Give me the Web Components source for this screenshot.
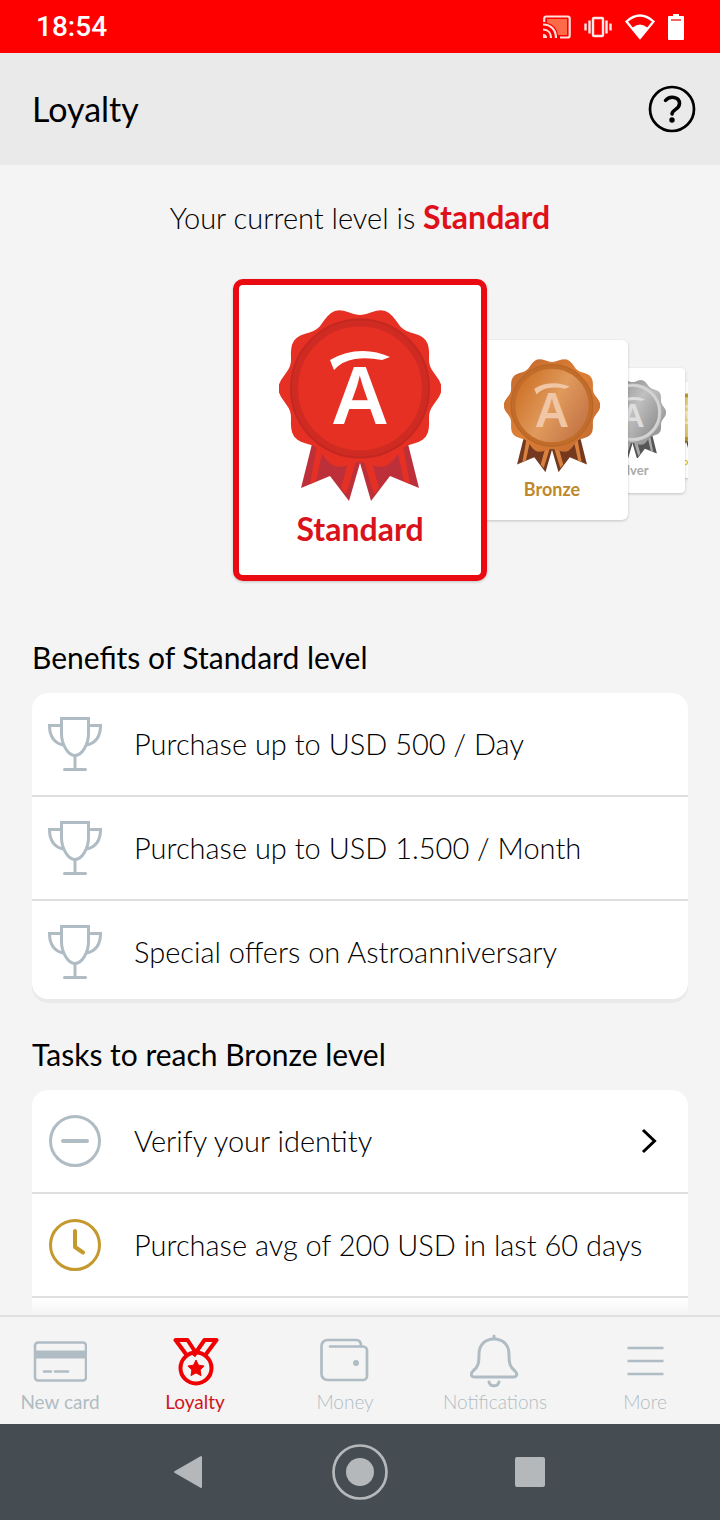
<!DOCTYPE html>
<html lang="en">
<head>
<meta charset="UTF-8">
<meta name="viewport" content="width=device-width, initial-scale=1">
<title>Loyalty</title>
<style>
    html, body {
        margin: 0;
        height: 100%;
    }

    body {
        font-family: "Lato", "Open Sans", sans-serif;
        color: #000;
        background: #f4f4f4;
    }
</style>
</head>
<body>
<loyalty-app></loyalty-app>

<script>
const icons = {
    trophy: `<svg width="54" height="54" viewBox="0 0 54 54" fill="none" stroke="#b0bcc3" stroke-width="3">
        <path d="M13.5 1.5h27v15c0 10-6 22-13.500 22s-13.500-12-13.500-22z"/>
        <path d="M13 8.500H1.500C1.500 19 6 26 15.500 28M41 8.500h11.500C52.500 19 48 26 38.500 28M27 39v13"/>
        <path d="M16.500 52.500h21" stroke-linecap="round"/></svg>`,
    minus: `<svg width="54" height="54" viewBox="0 0 54 54" fill="none" stroke="#b0bcc3" stroke-width="3">
        <circle cx="27" cy="27" r="24.500"/><path d="M15 27h24" stroke-width="4" stroke-linecap="round"/></svg>`,
    clock: `<svg width="54" height="54" viewBox="0 0 54 54" fill="none" stroke="#c49a2e" stroke-width="3">
        <circle cx="27" cy="27" r="24.500"/><path d="M27 13v16l8 5.500" stroke-width="4" stroke-linecap="round" stroke-linejoin="round"/></svg>`,
    card: `<svg width="54" height="50" viewBox="0 0 54 50" fill="none" stroke="#b0bcc3" stroke-width="2.500">
        <rect x="2" y="6.500" width="51" height="38" rx="3"/>
        <path d="M2 18.500h51" stroke-width="8"/><path d="M11 35.500h7M22 35.500h13" stroke-linecap="round"/></svg>`,
    medal: `<svg width="48" height="50" viewBox="0 0 48 50" fill="none" stroke="#f00000" stroke-width="4" stroke-linejoin="round">
        <circle cx="25" cy="32" r="15.500"/>
        <path d="M16 19.500L4.500 4h12l8.500 13M34 19.500L45.500 4h-12L22.500 20"/>
        <path d="M25 24l2.500 5.200 5.600.8-4 4 .9 5.600-5-2.700-5 2.700.9-5.600-4-4 5.600-.8z" fill="#f00000" stroke-width="1"/></svg>`,
    wallet: `<svg width="50" height="50" viewBox="0 0 50 50" fill="none" stroke="#b0bcc3" stroke-width="2.700">
        <path d="M10 10.500h33a4 4 0 0 1 4 4V40a4 4 0 0 1-4 4H7.500a6 6 0 0 1-6-6V10a6 6 0 0 1 6-6H36c3 0 5 2 5 6" stroke-linecap="round"/>
        <circle cx="36" cy="27" r="3" fill="#b0bcc3" stroke="none"/></svg>`,
    bell: `<svg width="50" height="56" viewBox="0 0 50 56" fill="none" stroke="#b0bcc3" stroke-width="3" stroke-linecap="round">
        <path d="M24 6c-9 0-15 6-15 15 0 10-1 13-6 17-3 3-2 6 2 6h38c4 0 5-3 2-6-5-4-6-7-6-17 0-9-6-15-15-15z"/>
        <path d="M24 3v2M19 49c1 5 9 5 10 0"/></svg>`,
    menu: `<svg width="50" height="50" viewBox="0 0 50 50" stroke="#b0bcc3" stroke-width="2.700">
        <path d="M7.500 12h36M7.500 25h36M7.500 38h36"/></svg>`,
    chevron: `<svg width="18" height="26" viewBox="0 0 18 26" fill="none" stroke="#000" stroke-width="3">
        <path d="M3 2l11.500 11L3 24"/></svg>`
};

class StatusBar extends HTMLElement {
    constructor() {
        super();
        this.attachShadow({ mode: 'open' });
    }

    connectedCallback() {
        this.shadowRoot.innerHTML = `
        <style>
            :host {
                display: flex;
                align-items: center;
                justify-content: space-between;
                height: 53px;
                padding: 0 36px;
                background: #f00;
                color: #fff;
                font: 500 28px/32px Roboto, sans-serif;
                box-sizing: border-box;
            }

            .icons {
                display: flex;
                align-items: center;
                gap: 13px;
            }

            svg { display: block; }
        </style>
        <time>18:54</time>
        <div class="icons">
            <svg width="28" height="24" viewBox="0 0 28 24" fill="none" stroke="#ffe0dc" stroke-width="2.200">
                <path d="M4 4h20v16h-9C14 13 10 9 4 8z" fill="#ff6b48" stroke="none"/>
                <path d="M1.200 7V3.500a2 2 0 0 1 2-2h21.500a2 2 0 0 1 2 2v17a2 2 0 0 1-2 2H17M0 9.500c8 0 13 5.500 13 13.500M0 14.500c5 0 8 3.500 8 8.500"/>
                <path d="M0 19a4 4 0 0 1 4 4H0z" fill="#ffe0dc" stroke="none"/>
            </svg>
            <svg width="28" height="22" viewBox="0 0 28 22" fill="none" stroke="#ffe8e8" stroke-width="2.400">
                <rect x="9" y="2" width="10" height="18" rx="1"/>
                <path d="M5.500 4.500v13M1.500 7.500v7M22.500 4.500v13M26.500 7.500v7"/>
            </svg>
            <svg width="30" height="26" viewBox="0 0 30 26">
                <path d="M1.500 7.500Q15-4.500 28.500 7.500L15 24z" fill="none" stroke="#fff" stroke-width="2.200"/>
                <path d="M7 14q8-7 16 0l-8 10z" fill="#fff"/>
            </svg>
            <svg width="16" height="26" viewBox="0 0 16 26">
                <path d="M5 0h6v2h4q1 0 1 1v22q0 1-1 1H1q-1 0-1-1V3q0-1 1-1h4z" fill="#fff"/>
                <path d="M3 6h10" stroke="#f23030" stroke-width="1.500"/>
            </svg>
        </div>
        `;
    }
}

class PageHeader extends HTMLElement {
    constructor() {
        super();
        this.attachShadow({ mode: 'open' });
    }

    connectedCallback() {
        this.shadowRoot.innerHTML = `
        <style>
            :host {
                display: flex;
                align-items: center;
                justify-content: space-between;
                height: 112px;
                padding: 0 24px 0 32px;
                background: #eaeaea;
                box-sizing: border-box;
            }

            h1 {
                margin: 0;
                font-size: 34px;
                line-height: 40px;
                font-weight: 400;
            }

            button {
                padding: 0;
                border: 0;
                background: none;
            }

            svg { display: block; }
        </style>
        <h1><slot></slot></h1>
        <button type="button" aria-label="Help">
            <svg width="48" height="48" viewBox="0 0 48 48" fill="none" stroke="#000">
                <circle cx="24" cy="24" r="22" stroke-width="2.700"/>
                <path d="M17.500 15.500c4-5 14-4 14 3 0 6-7 5.500-7.500 10.500" stroke-width="3.500" stroke-linecap="round"/>
                <circle cx="24" cy="35" r="2.700" fill="#000" stroke="none"/>
            </svg>
        </button>
        `;
    }
}

// Colours of each medal: scallop gradient, ring, face gradient, ribbon, stripe, letter
const medals = {
    standard: { edge: ['#e63023', '#e63023', '#e63023'], ring: '#cf2b23', face: ['#e63023', '#e63023', '#e63023'], ribbon: '#bd303a', stripe: '#e63023', mark: '#fff' },
    bronze: { edge: ['#c0672d', '#dd7f35', '#c0682f'], ring: '#c26c2a', face: ['#cc6c20', '#e09a5c', '#c06f42'], ribbon: '#75391f', stripe: '#d9823f', mark: '#f0c6a4' },
    silver: { edge: ['#777', '#bcbcbc', '#888'], ring: '#d4d4d4', face: ['#909090', '#c0c0c0', '#8d8d8d'], ribbon: '#565656', stripe: '#aaa', mark: '#dedede' },
    gold: { edge: ['#b48d20', '#d4b342', '#a98420'], ring: '#bd9828', face: ['#d5b84a', '#ead886', '#c9a534'], ribbon: '#5e4513', stripe: '#d4b342', mark: '#f5e8b4' }
};

function scallop(cx, cy) {
    const points = [];
    for (let a = 0; a < 360; a += 3) {
        const t = a * Math.PI / 180;
        const r = 77.5 + 4 * Math.cos(10 * t);
        points.push((cx + r * Math.cos(t)).toFixed(1) + ' ' + (cy + r * Math.sin(t)).toFixed(1));
    }
    return 'M' + points.join('L') + 'z';
}

class LevelCard extends HTMLElement {
    constructor() {
        super();
        this.attachShadow({ mode: 'open' });
    }

    connectedCallback() {
        const c = medals[this.getAttribute('level')];
        const stops = (list) => list.map((color, i) => `<stop offset="${i / 2}" stop-color="${color}"/>`).join('');
        const ribbon = `
            <path d="M34 130L22 178l29-12 19 25 11-38V130z" fill="${c.ribbon}"/>
            <path d="M39 130h7L37 171l-6 3zM71 145h8L67 184l-5-6z" fill="${c.stripe}"/>`;

        this.shadowRoot.innerHTML = `
        <style>
            :host {
                display: flex;
                flex: none;
                flex-direction: column;
                align-items: center;
                box-sizing: border-box;
                position: relative;
                background: #fff;
                box-shadow: 0 1px 3px rgba(0, 0, 0, 0.2);
                font-weight: 700;
            }

            :host([level="standard"]) {
                width: 254px;
                height: 302px;
                padding-top: 25px;
                border: 6px solid #ea0a12;
                border-radius: 10px;
                color: #d8131b;
                font-size: 32px;
                line-height: 40px;
                z-index: 4;
                --medal: 162px;
                --gap: 8px;
            }

            :host([level="bronze"]) {
                width: 152px;
                height: 180px;
                padding-top: 19px;
                margin-left: -11px;
                border-radius: 6px;
                color: #c0882a;
                font-size: 18px;
                line-height: 24px;
                z-index: 3;
                --medal: 96px;
                --gap: 5px;
            }

            :host([level="silver"]) {
                width: 105px;
                height: 125px;
                padding-top: 12px;
                margin-left: -48px;
                border-radius: 4px;
                color: #aaa;
                font-size: 13px;
                line-height: 16px;
                z-index: 2;
                --medal: 67px;
                --gap: 4px;
            }

            :host([level="gold"]) {
                width: 80px;
                height: 96px;
                padding-top: 10px;
                margin-left: -39px;
                border-radius: 4px;
                color: #d8bd2c;
                font-size: 10px;
                line-height: 12px;
                z-index: 1;
                --medal: 52px;
                --gap: 2px;
            }

            svg {
                display: block;
                width: var(--medal);
                margin-bottom: var(--gap);
            }
        </style>
        <svg viewBox="0 0 162 191" aria-hidden="true">
            <defs>
                <linearGradient id="edge" x1="0" y1="0" x2="1" y2="1">${stops(c.edge)}</linearGradient>
                <linearGradient id="face" x1="0" y1="0.2" x2="1" y2="0.8">${stops(c.face)}</linearGradient>
            </defs>
            <g>${ribbon}</g>
            <g transform="matrix(-1 0 0 1 162 0)">${ribbon}</g>
            <path d="${scallop(81, 78.5)}" fill="url(#edge)"/>
            <circle cx="81" cy="78.5" r="66" fill="url(#face)" stroke="${c.ring}" stroke-width="8"/>
            <circle cx="81" cy="78.5" r="69" fill="none" stroke="#000" stroke-opacity="0.06" stroke-width="2"/>
            <path d="M51 50Q66 41 84 41q14 0 27 6l-8 3Q88 47 76 49 63 51 55 60z" fill="${c.mark}"/>
            <text x="81" y="114" text-anchor="middle" font-family="Noto Sans, sans-serif" font-weight="600" font-size="80" fill="${c.mark}">A</text>
        </svg>
        <slot></slot>
        `;
    }
}

class LevelCarousel extends HTMLElement {
    constructor() {
        super();
        this.attachShadow({ mode: 'open' });
    }

    connectedCallback() {
        this.shadowRoot.innerHTML = `
        <style>
            :host {
                display: flex;
                align-items: center;
                padding-left: calc(50% - 127px);
                overflow-x: clip;
                isolation: isolate;
            }
        </style>
        <slot></slot>
        `;
    }
}

class ListSection extends HTMLElement {
    constructor() {
        super();
        this.attachShadow({ mode: 'open' });
    }

    connectedCallback() {
        this.shadowRoot.innerHTML = `
        <style>
            :host { display: block; }

            h2 {
                margin: 0 0 16px;
                font-size: 30px;
                line-height: 40px;
                font-weight: 400;
            }

            .list {
                background: #fff;
                border-radius: 16px;
                box-shadow: 0 4px 0 #eaeaea;
                overflow: hidden;
            }
        </style>
        <h2>${this.getAttribute('heading')}</h2>
        <div class="list" role="list"><slot></slot></div>
        `;
    }
}

class ListRow extends HTMLElement {
    constructor() {
        super();
        this.attachShadow({ mode: 'open' });
    }

    connectedCallback() {
        const icon = icons[this.getAttribute('icon')] || '';
        const href = this.getAttribute('href');
        const tag = href ? 'a' : 'div';

        this.setAttribute('role', 'listitem');
        this.shadowRoot.innerHTML = `
        <style>
            :host {
                display: block;
                border-bottom: 2px solid #e0e0e0;
            }

            :host(:last-child) { border-bottom: 0; }

            .row {
                display: flex;
                align-items: center;
                gap: 32px;
                min-height: 54px;
                padding: 24px 30px 24px 16px;
                color: inherit;
                text-decoration: none;
                font-size: 29px;
                line-height: 40px;
                font-weight: 300;
            }

            :host(:last-child) .row { padding-bottom: 20px; }

            .text { flex: 1; }

            svg { display: block; flex: none; }
        </style>
        <${tag} class="row" ${href ? `href="${href}"` : ''}>
            ${icon}
            <span class="text"><slot></slot></span>
            ${href ? icons.chevron : ''}
        </${tag}>
        `;
    }
}

class TabBar extends HTMLElement {
    constructor() {
        super();
        this.attachShadow({ mode: 'open' });
    }

    connectedCallback() {
        const tabs = [
            { label: 'New card', icon: 'card', style: 'strong' },
            { label: 'Loyalty', icon: 'medal', style: 'active' },
            { label: 'Money', icon: 'wallet', style: '' },
            { label: 'Notifications', icon: 'bell', style: '' },
            { label: 'More', icon: 'menu', style: '' }
        ];

        this.shadowRoot.innerHTML = `
        <style>
            :host { display: block; }

            nav {
                display: grid;
                grid-template-columns: 4fr 5fr 5fr 5fr 5fr;
                height: 109px;
                box-sizing: border-box;
                border-top: 2px solid #e0e0e0;
                background: #f4f4f4;
            }

            a {
                display: flex;
                flex-direction: column;
                align-items: center;
                padding-top: 16px;
                color: #b0bcc3;
                text-decoration: none;
                font-size: 19px;
                line-height: 26px;
                font-weight: 300;
            }

            .icon {
                display: flex;
                align-items: center;
                height: 56px;
            }

            .strong { font-weight: 400; }

            .active {
                color: #d0161e;
                font-weight: 400;
            }
        </style>
        <nav>
            ${tabs.map((tab) => `
                <a href="#" class="${tab.style}">
                    <span class="icon">${icons[tab.icon]}</span>
                    ${tab.label}
                </a>
            `).join('')}
        </nav>
        `;
    }
}

class SystemNav extends HTMLElement {
    constructor() {
        super();
        this.attachShadow({ mode: 'open' });
    }

    connectedCallback() {
        this.shadowRoot.innerHTML = `
        <style>
            :host {
                display: flex;
                align-items: center;
                justify-content: center;
                gap: 110px;
                height: 96px;
                background: #454d52;
            }

            button {
                width: 60px;
                height: 60px;
                padding: 0;
                border: 0;
                background: none;
            }

            svg { display: block; }
        </style>
        <button type="button" aria-label="Back">
            <svg width="60" height="60" viewBox="0 0 60 60"><path d="M41 15v30L15 30z" fill="#b4b8ba" stroke="#b4b8ba" stroke-width="2" stroke-linejoin="round"/></svg>
        </button>
        <button type="button" aria-label="Home">
            <svg width="60" height="60" viewBox="0 0 60 60"><circle cx="30" cy="30" r="26.500" fill="none" stroke="#b4b8ba" stroke-width="2.700"/><circle cx="30" cy="30" r="14" fill="#b4b8ba"/></svg>
        </button>
        <button type="button" aria-label="Recent apps">
            <svg width="60" height="60" viewBox="0 0 60 60"><rect x="15" y="15" width="30" height="30" rx="2" fill="#b4b8ba"/></svg>
        </button>
        `;
    }
}

class LoyaltyApp extends HTMLElement {
    constructor() {
        super();
        this.attachShadow({ mode: 'open' });
    }

    connectedCallback() {
        this.shadowRoot.innerHTML = `
        <style>
            :host {
                display: flex;
                flex-direction: column;
                height: 100vh;
            }

            .body {
                flex: 1;
                min-height: 0;
                position: relative;
            }

            /* content fades out just above the tab bar */
            .body::after {
                content: "";
                position: absolute;
                left: 0;
                right: 0;
                bottom: 0;
                height: 16px;
                background: linear-gradient(rgba(244, 244, 244, 0), #f4f4f4);
                pointer-events: none;
            }

            main {
                height: 100%;
                overflow-y: auto;
                scrollbar-width: none;
                box-sizing: border-box;
                padding: 32px 32px 0;
            }

            .level {
                margin: 0 0 41px;
                text-align: center;
                font-size: 29px;
                line-height: 40px;
                font-weight: 300;
            }

            .level strong {
                color: #e0101a;
                font-size: 32px;
                font-weight: 700;
            }

            level-carousel { margin-bottom: 56px; }

            list-section { margin-bottom: 35px; }
        </style>
        <status-bar></status-bar>
        <page-header>Loyalty</page-header>
        <div class="body">
            <main>
                <p class="level">Your current level is <strong>Standard</strong></p>
                <level-carousel>
                    <level-card level="standard">Standard</level-card>
                    <level-card level="bronze">Bronze</level-card>
                    <level-card level="silver">Silver</level-card>
                    <level-card level="gold">Gold</level-card>
                </level-carousel>
                <list-section heading="Benefits of Standard level">
                    <list-row icon="trophy">Purchase up to USD 500 / Day</list-row>
                    <list-row icon="trophy">Purchase up to USD 1.500 / Month</list-row>
                    <list-row icon="trophy">Special offers on Astroanniversary</list-row>
                </list-section>
                <list-section heading="Tasks to reach Bronze level">
                    <list-row icon="minus" href="#verify">Verify your identity</list-row>
                    <list-row icon="clock">Purchase avg of 200 USD in last 60 days</list-row>
                    <list-row></list-row>
                </list-section>
            </main>
        </div>
        <tab-bar></tab-bar>
        <system-nav></system-nav>
        `;
    }
}

customElements.define('status-bar', StatusBar);
customElements.define('page-header', PageHeader);
customElements.define('level-card', LevelCard);
customElements.define('level-carousel', LevelCarousel);
customElements.define('list-section', ListSection);
customElements.define('list-row', ListRow);
customElements.define('tab-bar', TabBar);
customElements.define('system-nav', SystemNav);
customElements.define('loyalty-app', LoyaltyApp);
</script>
</body>
</html>
